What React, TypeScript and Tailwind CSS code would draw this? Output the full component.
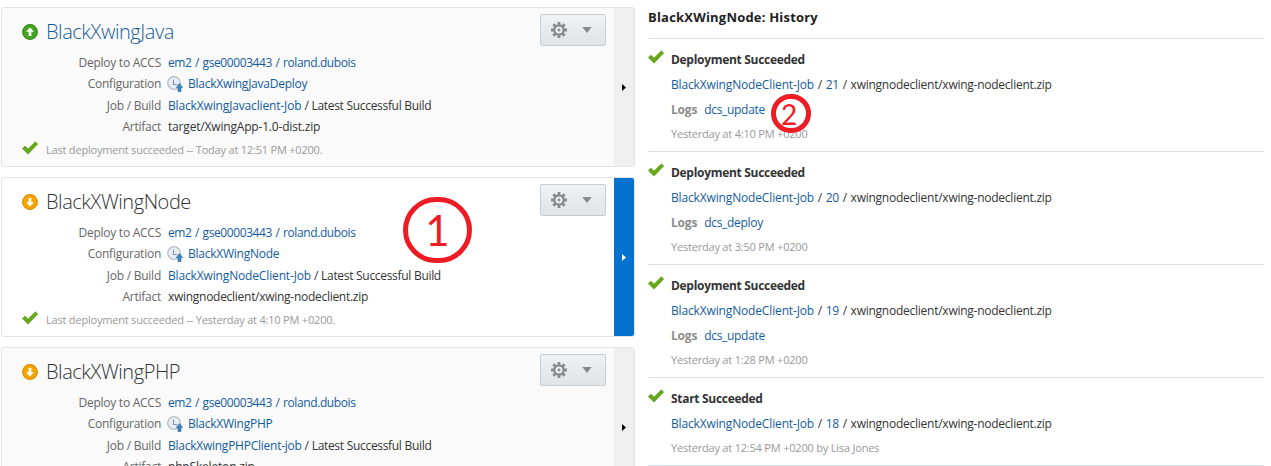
import React from "react";

type Deployment = {
  name: string;
  up?: boolean;
  selected?: boolean;
  config: string;
  job: string;
  artifact: string;
  status: string;
};

const deployments: Deployment[] = [
  {
    name: "BlackXwingJava",
    up: true,
    config: "BlackXwingJavaDeploy",
    job: "BlackXwingJavaclient-Job",
    artifact: "target/XwingApp-1.0-dist.zip",
    status: "Last deployment succeeded -- Today at 12:51 PM +0200.",
  },
  {
    name: "BlackXWingNode",
    selected: true,
    config: "BlackXWingNode",
    job: "BlackXwingNodeClient-Job",
    artifact: "xwingnodeclient/xwing-nodeclient.zip",
    status: "Last deployment succeeded -- Yesterday at 4:10 PM +0200.",
  },
  {
    name: "BlackXWingPHP",
    config: "BlackXWingPHP",
    job: "BlackXwingPHPClient-job",
    artifact: "phpSkeleton.zip",
    status: "Last deployment succeeded -- Yesterday at 1:05 PM +0200.",
  },
];

const history = [
  { title: "Deployment Succeeded", build: "21", log: "dcs_update", time: "Yesterday at 4:10 PM +0200" },
  { title: "Deployment Succeeded", build: "20", log: "dcs_deploy", time: "Yesterday at 3:50 PM +0200" },
  { title: "Deployment Succeeded", build: "19", log: "dcs_update", time: "Yesterday at 1:28 PM +0200" },
  { title: "Start Succeeded", build: "18", time: "Yesterday at 12:54 PM +0200 by Lisa Jones" },
];

function Check({ className = "" }: { className?: string }) {
  return (
    <svg className={`shrink-0 ${className}`} width="16" height="14" viewBox="0 0 16 14">
      <path d="M0.3 7.6L3 5.1L6 8.1L13.3 0.7L15.8 3L6 13.2Z" fill="#66a81c" stroke="#5a9a14" strokeWidth="0.5" />
    </svg>
  );
}

function StateIcon({ up }: { up?: boolean }) {
  return (
    <svg className="shrink-0" width="16" height="16" viewBox="0 0 16 16">
      <circle cx="8" cy="8" r="7.4" fill={up ? "#45a321" : "#f7a501"} stroke={up ? "#37891a" : "#d98d08"} strokeWidth="1.1" />
      <path
        d="M8 3.4L12 7.8H9.4V12H6.6V7.8H4Z"
        fill="#fff"
        transform={up ? undefined : "rotate(180 8 8)"}
      />
    </svg>
  );
}

function ConfigIcon() {
  return (
    <svg className="-ml-px mr-[5px] shrink-0" width="16" height="16" viewBox="0 0 16 16">
      <circle cx="7" cy="7" r="6.3" fill="#e6edf5" stroke="#b4bbc3" strokeWidth="1.2" />
      <path d="M6.5 3.5V8.5H10" fill="none" stroke="#8b929b" strokeWidth="1.1" />
      <path d="M12.5 7.6L15.6 11.4H14V15.6H11V11.4H9.4Z" fill="#4389bf" stroke="#2a6fa8" strokeWidth="0.7" />
    </svg>
  );
}

const TEETH = [0, 45, 90, 135, 180, 225, 270, 315];

function Gear() {
  return (
    <svg width="16" height="16" viewBox="0 0 16 16">
      <circle cx="8" cy="8" r="4.7" fill="none" stroke="#858a8e" strokeWidth="2.2" />
      {TEETH.map((a) => (
        <path key={a} d="M6.6 0H9.4V3.4H6.6Z" fill="#858a8e" transform={`rotate(${a} 8 8)`} />
      ))}
      <circle cx="8" cy="8" r="1.4" fill="#858a8e" />
    </svg>
  );
}

function Row({ label, className = "", children }: { label: string; className?: string; children: React.ReactNode }) {
  return (
    <div className={`flex h-[21px] items-center whitespace-nowrap ${className}`}>
      <div className="mr-[7px] w-[139px] text-right tracking-[-0.25px] text-[#666]">{label}</div>
      <div className="flex items-center whitespace-pre text-[#333]">{children}</div>
    </div>
  );
}

function Link({ className = "", children }: { className?: string; children: React.ReactNode }) {
  return <a className={`text-[#145c9e] ${className}`}>{children}</a>;
}

function Card({ d }: { d: Deployment }) {
  return (
    <div
      className={`flex h-40 w-[634px] shrink-0 overflow-hidden rounded-[3px] border border-[#e3e3e3] ${
        d.selected ? "bg-white" : "bg-[#fafafa]"
      }`}
    >
      <div className="flex min-w-0 flex-1 flex-col pl-5">
        <div className="flex h-11 items-start justify-between pr-2">
          <div className="flex items-center gap-2 pt-[9px]">
            <StateIcon up={d.up} />
            <h2 className={`h-[30px] text-[20px] leading-[30px] font-light tracking-[-0.45px] ${d.up ? "text-[#145c9e]" : "text-[#333]"}`}>
              {d.name}
            </h2>
          </div>
          <button className="mt-1.5 flex h-8 w-[66px] items-center rounded-[2px] border border-[#c4ced7] bg-linear-to-b from-[#f0f2f4] to-[#e0e4e7] pl-2.5">
            <Gear />
            <svg className="ml-[15px]" width="10" height="6" viewBox="0 0 10 6">
              <path d="M0.3 0H9.7L5 6Z" fill="#858a8e" />
            </svg>
          </button>
        </div>
        <Row label="Deploy to ACCS">
          <Link className="tracking-[-0.4px] [word-spacing:0.8px]">em2 / gse00003443 / roland.dubois</Link>
        </Row>
        <Row label="Configuration">
          <ConfigIcon />
          <Link className="tracking-[-0.25px]">{d.config}</Link>
        </Row>
        <Row label="Job / Build" className="mt-px">
          <Link className={d.job.endsWith("-Job") ? "tracking-[-0.15px]" : "tracking-[-0.25px]"}>{d.job}</Link>
          <span className="tracking-[-0.32px] [word-spacing:0.2px]"> / Latest Successful Build</span>
        </Row>
        <Row label="Artifact">
          <span className={d.selected ? "tracking-[-0.28px]" : "tracking-[-0.18px]"}>{d.artifact}</span>
        </Row>
        <div className="mt-[3px] flex items-center gap-2 text-[11px] leading-5 tracking-[-0.2px] whitespace-nowrap text-[#999]">
          <Check className="-mt-1" />
          <span>{d.status}</span>
        </div>
      </div>
      <div className={`flex w-5 items-center pl-2 ${d.selected ? "bg-[#0572ce] text-white" : "bg-[#efefef] text-black"}`}>
        <svg width="4" height="7" viewBox="0 0 4 7">
          <path d="M0 0L4 3.5L0 7Z" fill="currentColor" />
        </svg>
      </div>
    </div>
  );
}

export default function App() {
  return (
    <div className="relative flex h-[466px] w-[1271px] overflow-hidden bg-white font-['Open_Sans',sans-serif] text-[12px] tracking-[-0.3px]">
      <div className="flex w-[648px] shrink-0 flex-col gap-2.5 pt-[7px] pl-px">
        {deployments.map((d) => (
          <Card key={d.name} d={d} />
        ))}
      </div>
      <div className="w-[616px]">
        <h1 className="h-[39px] border-b border-[#d6dfe6] pt-[7px] text-[13px] leading-5 font-bold tracking-[0.2px] text-[#222]">
          BlackXWingNode: History
        </h1>
        {history.map((h) => (
          <div key={h.build} className={`flex gap-2 border-b border-[#d6dfe6] ${h.log ? "h-[113px]" : "h-[88px]"}`}>
            <Check className="mt-[11px]" />
            <div className="-ml-px whitespace-pre">
              <div className="mt-[11px] leading-5 font-bold tracking-[-0.3px] text-[#333]">{h.title}</div>
              <div className="mt-[5px] leading-5 tracking-[-0.25px] text-[#333] [word-spacing:0.9px]">
                <Link className="tracking-[-0.15px]">BlackXwingNodeClient-Job</Link> / <Link>{h.build}</Link> / xwingnodeclient/xwing-nodeclient.zip
              </div>
              {h.log && (
                <div className="mt-[5px] flex gap-[7px] leading-5">
                  <b className="tracking-[-0.2px] text-[#8c8c8c]">Logs</b>
                  <Link>{h.log}</Link>
                </div>
              )}
              <div className="mt-1 text-[11px] leading-5 tracking-[-0.2px] text-[#999]">{h.time}</div>
            </div>
          </div>
        ))}
      </div>
      <div className="absolute top-[197px] left-[403px] flex h-[66px] w-[69px] items-center justify-center rounded-full border-[5px] border-[#ed1c24] font-['Lato',sans-serif] text-[42px] leading-none tracking-normal text-[#ed1c24]">
        1
      </div>
      <div className="absolute top-[94px] left-[771px] flex h-[39px] w-[40px] items-center justify-center rounded-full border-[5px] border-[#ed1c24] pr-1 font-['Lato',sans-serif] text-[28px] leading-none tracking-normal text-[#ed1c24]">
        2
      </div>
    </div>
  );
}
